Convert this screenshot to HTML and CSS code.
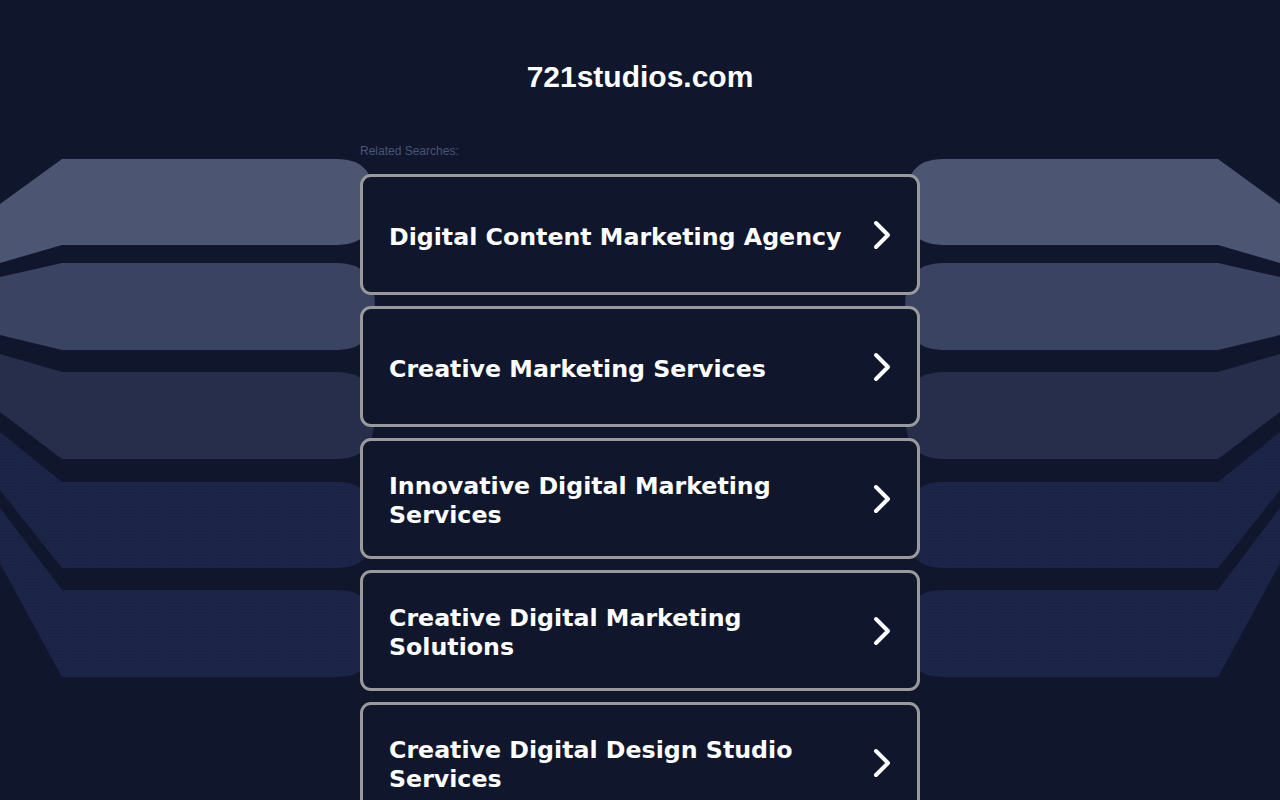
FILE: index.html
```html
<!DOCTYPE html>
<html lang="en">
<head>
<meta charset="utf-8">
<title>721studios.com</title>
<link rel="stylesheet" href="styles.css">
</head>
<body>
<svg class="backdrop" width="1280" height="800" viewBox="0 0 1280 800" aria-hidden="true">
  <defs>
    <pattern id="dots" width="3" height="3" patternUnits="userSpaceOnUse">
      <rect width="3" height="3" fill="#1c2547"/>
      <rect width="1" height="1" fill="#172040"/>
    </pattern>
    <g id="bands">
      <path fill="#4c5673" d="M0,204 L62,159 L338,159 Q375,159 375,202 Q375,245 338,245 L62,245 L0,263 Z"/>
      <path fill="#3a4361" d="M0,277 L62,263 L338,263 Q375,263 375,306 Q375,350 338,350 L62,350 L0,335 Z"/>
      <path fill="#262e4c" d="M0,354 L62,372 L338,372 Q375,372 375,415 Q375,459 338,459 L62,459 L0,412 Z"/>
      <path fill="url(#dots)" d="M0,432 L62,482 L338,482 Q375,482 375,525 Q375,568 338,568 L62,568 L0,490 Z"/>
      <path fill="url(#dots)" d="M0,508 L62,590 L338,590 Q375,590 375,633 Q375,677 338,677 L62,677 L0,563 Z"/>
    </g>
  </defs>
  <use href="#bands"/>
  <use href="#bands" transform="translate(1280,0) scale(-1,1)"/>
</svg>
<main class="page">
  <h1 class="domain">721studios.com</h1>
  <p class="related">Related Searches:</p>
  <a class="card" href="#"><span class="label">Digital Content Marketing Agency</span><svg class="chev" width="20" height="30" viewBox="0 0 20 30"><polyline points="4,3 16,15 4,27"/></svg></a>
  <a class="card" href="#"><span class="label">Creative Marketing Services</span><svg class="chev" width="20" height="30" viewBox="0 0 20 30"><polyline points="4,3 16,15 4,27"/></svg></a>
  <a class="card" href="#"><span class="label">Innovative Digital Marketing Services</span><svg class="chev" width="20" height="30" viewBox="0 0 20 30"><polyline points="4,3 16,15 4,27"/></svg></a>
  <a class="card" href="#"><span class="label">Creative Digital Marketing Solutions</span><svg class="chev" width="20" height="30" viewBox="0 0 20 30"><polyline points="4,3 16,15 4,27"/></svg></a>
  <a class="card" href="#"><span class="label">Creative Digital Design Studio Services</span><svg class="chev" width="20" height="30" viewBox="0 0 20 30"><polyline points="4,3 16,15 4,27"/></svg></a>
</main>
</body>
</html>
```

FILE: styles.css
```css
html, body {
  margin: 0;
  padding: 0;
  background: #10172d;
}
body {
  position: relative;
  min-height: 800px;
  font-family: "Liberation Sans", Arial, sans-serif;
  color: #fff;
}
.backdrop {
  position: absolute;
  left: 0;
  top: 0;
  z-index: 0;
}
.page {
  position: relative;
  z-index: 1;
  width: 560px;
  margin: 0 auto;
}
.domain {
  margin: 60px 0 0;
  font-family: "Liberation Sans", Arial, sans-serif;
  font-weight: bold;
  font-size: 30px;
  line-height: 34px;
  text-align: center;
  color: #ffffff;
}
.related {
  margin: 50px 0 16px;
  font-size: 12px;
  line-height: 14px;
  color: #4a5476;
}
.card {
  box-sizing: border-box;
  height: 121px;
  margin-bottom: 11px;
  display: flex;
  align-items: center;
  padding: 0 25px 0 26px;
  border: 3px solid #9a9a9a;
  border-radius: 11px;
  background: #10172d;
  text-decoration: none;
  color: #ffffff;
}
.label {
  flex: 1;
  margin-top: 5px;
  padding-right: 10px;
  font-family: "DejaVu Sans", Verdana, sans-serif;
  font-weight: bold;
  font-size: 23.7px;
  line-height: 29px;
}
.chev {
  flex: none;
  display: block;
}
.chev polyline {
  fill: none;
  stroke: #ffffff;
  stroke-width: 4;
  stroke-linecap: round;
  stroke-linejoin: round;
}
```
